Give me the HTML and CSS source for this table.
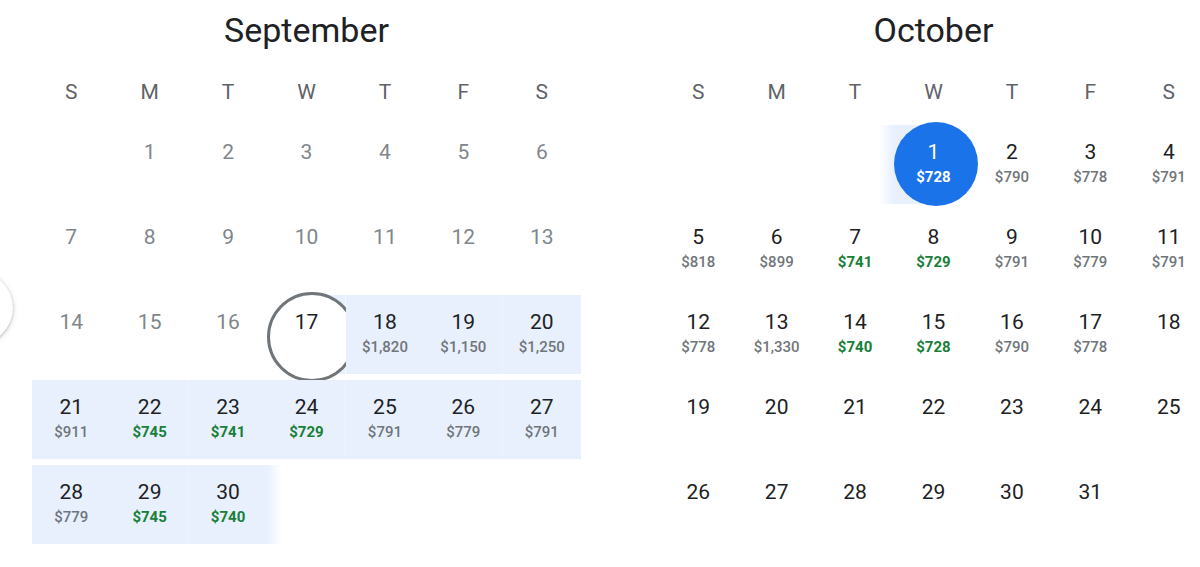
FILE: index.html
```html
<!DOCTYPE html>
<html lang="en">
<head>
<meta charset="utf-8">
<title>Calendar</title>
<link rel="stylesheet" href="styles.css">
</head>
<body>
<div class="nav" aria-hidden="true"></div>
<div class="months">
  <section class="month">
    <h2 class="title">September</h2>
    <div class="weekdays"><span>S</span><span>M</span><span>T</span><span>W</span><span>T</span><span>F</span><span>S</span></div>
    <div class="grid">
      <div class="day"></div>
      <div class="day past"><span class="num">1</span></div>
      <div class="day past"><span class="num">2</span></div>
      <div class="day past"><span class="num">3</span></div>
      <div class="day past"><span class="num">4</span></div>
      <div class="day past"><span class="num">5</span></div>
      <div class="day past"><span class="num">6</span></div>

      <div class="day past"><span class="num">7</span></div>
      <div class="day past"><span class="num">8</span></div>
      <div class="day past"><span class="num">9</span></div>
      <div class="day past"><span class="num">10</span></div>
      <div class="day past"><span class="num">11</span></div>
      <div class="day past"><span class="num">12</span></div>
      <div class="day past"><span class="num">13</span></div>

      <div class="day past"><span class="num">14</span></div>
      <div class="day past"><span class="num">15</span></div>
      <div class="day past"><span class="num">16</span></div>
      <div class="day range-start selected start"><span class="num">17</span></div>
      <div class="day range"><span class="num">18</span><span class="price">$1,820</span></div>
      <div class="day range"><span class="num">19</span><span class="price">$1,150</span></div>
      <div class="day range"><span class="num">20</span><span class="price">$1,250</span></div>

      <div class="day range"><span class="num">21</span><span class="price">$911</span></div>
      <div class="day range"><span class="num">22</span><span class="price low">$745</span></div>
      <div class="day range"><span class="num">23</span><span class="price low">$741</span></div>
      <div class="day range"><span class="num">24</span><span class="price low">$729</span></div>
      <div class="day range"><span class="num">25</span><span class="price">$791</span></div>
      <div class="day range"><span class="num">26</span><span class="price">$779</span></div>
      <div class="day range"><span class="num">27</span><span class="price">$791</span></div>

      <div class="day range"><span class="num">28</span><span class="price">$779</span></div>
      <div class="day range"><span class="num">29</span><span class="price low">$745</span></div>
      <div class="day range"><span class="num">30</span><span class="price low">$740</span></div>
      <div class="day fade-out"></div>
    </div>
  </section>

  <section class="month">
    <h2 class="title">October</h2>
    <div class="weekdays"><span>S</span><span>M</span><span>T</span><span>W</span><span>T</span><span>F</span><span>S</span></div>
    <div class="grid">
      <div class="day"></div>
      <div class="day"></div>
      <div class="day fade-in"></div>
      <div class="day range-end selected end"><span class="num">1</span><span class="price">$728</span></div>
      <div class="day"><span class="num">2</span><span class="price">$790</span></div>
      <div class="day"><span class="num">3</span><span class="price">$778</span></div>
      <div class="day"><span class="num">4</span><span class="price">$791</span></div>

      <div class="day"><span class="num">5</span><span class="price">$818</span></div>
      <div class="day"><span class="num">6</span><span class="price">$899</span></div>
      <div class="day"><span class="num">7</span><span class="price low">$741</span></div>
      <div class="day"><span class="num">8</span><span class="price low">$729</span></div>
      <div class="day"><span class="num">9</span><span class="price">$791</span></div>
      <div class="day"><span class="num">10</span><span class="price">$779</span></div>
      <div class="day"><span class="num">11</span><span class="price">$791</span></div>

      <div class="day"><span class="num">12</span><span class="price">$778</span></div>
      <div class="day"><span class="num">13</span><span class="price">$1,330</span></div>
      <div class="day"><span class="num">14</span><span class="price low">$740</span></div>
      <div class="day"><span class="num">15</span><span class="price low">$728</span></div>
      <div class="day"><span class="num">16</span><span class="price">$790</span></div>
      <div class="day"><span class="num">17</span><span class="price">$778</span></div>
      <div class="day"><span class="num">18</span></div>

      <div class="day"><span class="num">19</span></div>
      <div class="day"><span class="num">20</span></div>
      <div class="day"><span class="num">21</span></div>
      <div class="day"><span class="num">22</span></div>
      <div class="day"><span class="num">23</span></div>
      <div class="day"><span class="num">24</span></div>
      <div class="day"><span class="num">25</span></div>

      <div class="day"><span class="num">26</span></div>
      <div class="day"><span class="num">27</span></div>
      <div class="day"><span class="num">28</span></div>
      <div class="day"><span class="num">29</span></div>
      <div class="day"><span class="num">30</span></div>
      <div class="day"><span class="num">31</span></div>
    </div>
  </section>
</div>
</body>
</html>
```
FILE: styles.css
```css
* { box-sizing: border-box; }

html, body {
  margin: 0;
  height: 100%;
  overflow: hidden;
  background: #fff;
}

body {
  font-family: Roboto, "Noto Sans", "Liberation Sans", sans-serif;
  color: #202124;
  position: relative;
}

.nav {
  position: absolute;
  left: -59px;
  top: 272px;
  width: 72px;
  height: 72px;
  border-radius: 50%;
  background: #fff;
  box-shadow: 0 1px 3px rgba(60, 64, 67, 0.3), 0 1px 6px rgba(60, 64, 67, 0.15);
}

.months {
  display: flex;
  gap: 78px;
  padding-left: 32px;
}

.month {
  flex: 0 0 549px;
}

.title {
  margin: 10px 0 0;
  height: 40px;
  line-height: 40px;
  text-align: center;
  font-size: 34px;
  font-weight: 400;
  color: #202124;
}

.weekdays {
  display: grid;
  grid-template-columns: repeat(7, 1fr);
  margin-top: 30px;
  height: 42px;
}

.weekdays span {
  text-align: center;
  font-size: 21px;
  line-height: 24px;
  color: #5f6368;
}

.grid {
  display: grid;
  grid-template-columns: repeat(7, 1fr);
  grid-auto-rows: 85px;
}

.day {
  position: relative;
  display: flex;
  flex-direction: column;
  align-items: center;
  padding-top: 18px;
}

.num {
  position: relative;
  z-index: 1;
  font-size: 21px;
  line-height: 24px;
  color: #202124;
}

.price {
  position: relative;
  z-index: 1;
  margin-top: 4px;
  font-size: 15px;
  line-height: 19px;
  font-weight: 500;
  color: #70757a;
}

.price.low {
  color: #188038;
  font-weight: 700;
}

.past .num { color: #80868b; }

.range {
  background: linear-gradient(#e8f0fe, #e8f0fe) center / 100% 79px no-repeat;
}

.range-start {
  background: linear-gradient(#e8f0fe, #e8f0fe) right center / 50% 79px no-repeat;
}

.range-end {
  background: linear-gradient(#e8f0fe, #e8f0fe) left center / 50% 79px no-repeat;
}

.fade-out {
  background: linear-gradient(90deg, #e8f0fe, rgba(232, 240, 254, 0)) left center / 15px 79px no-repeat;
}

.fade-in {
  background: linear-gradient(90deg, rgba(232, 240, 254, 0), #e8f0fe) right center / 15px 79px no-repeat;
}

.selected::before {
  content: "";
  position: absolute;
  top: 0;
  left: calc(50% - 39px);
  width: 84px;
  height: 84px;
  border-radius: 50%;
}

.start::before {
  background: #fff;
  border: 3px solid #70757a;
}

.end::before {
  background: #1a73e8;
}

.end .num,
.end .price {
  color: #fff;
}

.end .price {
  font-weight: 700;
}
```
